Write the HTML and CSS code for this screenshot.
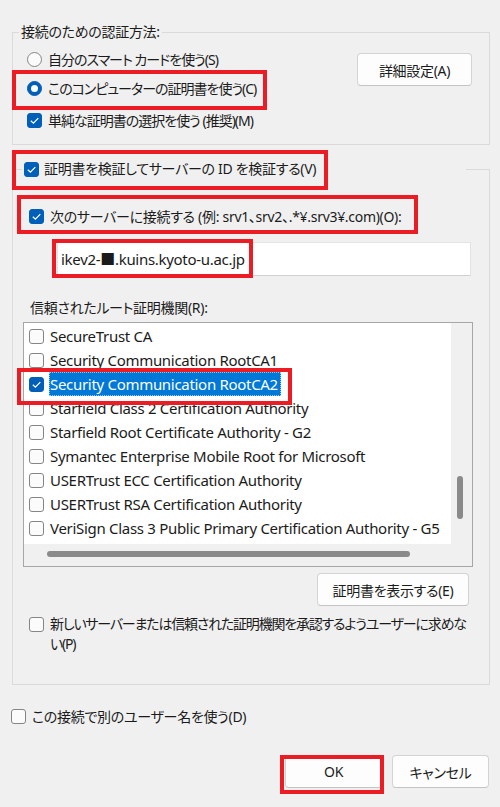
FILE: index.html
```html
<!DOCTYPE html>
<html lang="ja">
<head>
  <meta charset="utf-8">
  <title>保護された EAP のプロパティ</title>
  <link rel="stylesheet" href="styles.css">
</head>
<body>
  <div class="dialog">
    <fieldset class="group auth">
      <legend>接続のための認証方法:</legend>
      <div class="auth-body">
        <div class="options">
          <div class="opt opt-smart"><span class="radio"></span>自分のスマート カードを使う(S)</div>
          <div class="opt opt-cert"><span class="radio on"></span>このコンピューターの証明書を使う(C)</div>
          <div class="opt opt-simple"><span class="box on"><svg viewBox="0 0 15 15"><path d="M3.8 7.7l2.6 2.5 4.9-5.1"/></svg></span>単純な証明書の選択を使う (推奨)(M)</div>
        </div>
        <button class="btn btn-adv">詳細設定(A)</button>
      </div>
    </fieldset>

    <fieldset class="group verify">
      <legend><span class="box on"><svg viewBox="0 0 15 15"><path d="M3.8 7.7l2.6 2.5 4.9-5.1"/></svg></span>証明書を検証してサーバーの ID を検証する(V)</legend>
      <div class="verify-body">
        <div class="opt opt-server"><span class="box on"><svg viewBox="0 0 15 15"><path d="M3.8 7.7l2.6 2.5 4.9-5.1"/></svg></span>次のサーバーに接続する (例: srv1、srv2、.*¥.srv3¥.com)(O):</div>
        <div class="field">ikev2-■.kuins.kyoto-u.ac.jp</div>
        <div class="list-label">信頼されたルート証明機関(R):</div>
        <div class="list">
          <div class="list-items">
            <div class="item"><span class="box"></span><span class="item-text">SecureTrust CA</span></div>
            <div class="item"><span class="box"></span><span class="item-text">Security Communication RootCA1</span></div>
            <div class="item"><span class="box on"><svg viewBox="0 0 15 15"><path d="M3.8 7.7l2.6 2.5 4.9-5.1"/></svg></span><span class="item-text selected">Security Communication RootCA2</span></div>
            <div class="item"><span class="box"></span><span class="item-text">Starfield Class 2 Certification Authority</span></div>
            <div class="item"><span class="box"></span><span class="item-text">Starfield Root Certificate Authority - G2</span></div>
            <div class="item"><span class="box"></span><span class="item-text">Symantec Enterprise Mobile Root for Microsoft</span></div>
            <div class="item"><span class="box"></span><span class="item-text">USERTrust ECC Certification Authority</span></div>
            <div class="item"><span class="box"></span><span class="item-text">USERTrust RSA Certification Authority</span></div>
            <div class="item"><span class="box"></span><span class="item-text">VeriSign Class 3 Public Primary Certification Authority - G5</span></div>
          </div>
          <div class="vscroll"><span class="vthumb"></span></div>
          <div class="hscroll"><span class="hthumb"></span></div>
          <div class="corner"></div>
        </div>
        <button class="btn btn-view">証明書を表示する(E)</button>
        <div class="opt opt-prompt"><span class="box"></span><span class="prompt-text">新しいサーバーまたは信頼された証明機関を承認するようユーザーに求めな<br>い(P)</span></div>
      </div>
    </fieldset>

    <div class="opt opt-user"><span class="box"></span>この接続で別のユーザー名を使う(D)</div>

    <div class="actions">
      <button class="btn btn-ok">OK</button>
      <button class="btn btn-cancel">キャンセル</button>
    </div>
  </div>

  <!-- red annotation frames -->
  <div class="mark mark-cert"></div>
  <div class="mark mark-verify"></div>
  <div class="mark mark-server"></div>
  <div class="mark mark-field"></div>
  <div class="mark mark-root"></div>
  <div class="mark mark-ok"></div>
</body>
</html>
```

FILE: styles.css
```css
* {
  box-sizing: border-box;
}

body {
  margin: 0;
  width: 500px;
  height: 807px;
  background-color: #f0f0f0;
  color: #1b1b1b;
  font-family: "Noto Sans", "Noto Sans CJK JP", sans-serif;
  font-size: 14px;
  letter-spacing: -0.3px;
  font-feature-settings: "palt";
  position: relative;
  overflow: hidden;
}

.dialog {
  padding: 0 10px 0 12px;
}

.group {
  margin: 0;
  padding: 0;
  border: 1px solid #dadada;
  min-width: 0;
}

.group legend {
  margin-left: 6px;
  padding: 0 2px;
  line-height: 20px;
}

.auth {
  margin-top: 22px;
  padding-bottom: 12px;
}

.auth-body {
  display: flex;
  justify-content: space-between;
  padding: 5px 17px 0 14px;
}

.opt {
  display: flex;
  align-items: center;
  gap: 6px;
  height: 24px;
  white-space: nowrap;
}

.options .opt {
  letter-spacing: -1px;
}

.opt-cert {
  margin-top: 5px;
}

.opt-simple {
  margin-top: 8px;
}

/* check boxes and radio buttons */
.box,
.radio {
  flex: none;
  width: 15px;
  height: 15px;
  border: 1px solid #858585;
  background-color: #fbfbfb;
}

.box {
  border-radius: 3px;
}

.box svg {
  display: block;
  width: 15px;
  height: 15px;
  margin: -1px;
}

.box svg path {
  fill: none;
  stroke: #fff;
  stroke-width: 1.3;
}

.box.on {
  background-color: #005fb8;
  border-color: #005fb8;
}

.radio {
  border-radius: 50%;
}

.radio.on {
  background-color: #005fb8;
  border-color: #005fb8;
  display: flex;
  align-items: center;
  justify-content: center;
}

.radio.on::after {
  content: "";
  width: 7px;
  height: 7px;
  border-radius: 50%;
  background-color: #fff;
}

.btn {
  font: inherit;
  letter-spacing: inherit;
  color: #1b1b1b;
  background-color: #fdfdfd;
  border: 1px solid #d3d3d3;
  border-bottom-color: #c4c4c4;
  border-radius: 4px;
  padding: 0;
  height: 33px;
}

.btn-adv {
  width: 115px;
  margin-top: 6px;
}

/* certificate verification group */
.verify {
  margin-top: 12px;
  padding-bottom: 30px;
}

.verify legend {
  display: flex;
  align-items: center;
  gap: 5px;
  width: 444px;
  height: 24px;
  margin-left: 9px;
  padding: 0 0 0 2px;
  background-color: #f0f0f0;
  white-space: nowrap;
}

.verify-body {
  display: flex;
  flex-direction: column;
  padding: 0 0 0 10px;
}

.opt-server {
  margin: 23px 0 0 6px;
}

.field {
  width: 414px;
  height: 34px;
  margin: 14px 0 0 34px;
  padding-left: 3px;
  line-height: 32px;
  font-size: 15px;
  background-color: #fff;
  border: 1px solid #e3e3e3;
  border-bottom-color: #d0d0d0;
}

.list-label {
  margin: 20px 0 0 7px;
  line-height: 24px;
}

.list {
  display: grid;
  grid-template-columns: 1fr 21px;
  grid-template-rows: 1fr 22px;
  width: 450px;
  height: 245px;
  margin-top: 2px;
  border: 1px solid #a6a6a6;
  background-color: #fff;
}

.list-items {
  padding: 1px 0 0 5px;
  overflow: hidden;
  font-size: 15px;
}

.item {
  display: flex;
  align-items: center;
  gap: 5px;
  height: 24px;
  white-space: nowrap;
}

.item-text {
  line-height: 24px;
  padding: 0 3px 0 1px;
}

.item-text.selected {
  background-color: #0078d7;
  color: #fff;
  outline: 1px dotted #9cc7ef;
  outline-offset: -1px;
}

.vscroll,
.hscroll,
.corner {
  background-color: #f0f0f0;
}

.vthumb {
  display: block;
  width: 6px;
  height: 43px;
  margin: 153px 0 0 6px;
  border-radius: 3px;
  background-color: #8a8a8a;
}

.hthumb {
  display: block;
  width: 363px;
  height: 6px;
  margin: 7px 0 0 23px;
  border-radius: 3px;
  background-color: #8a8a8a;
}

.btn-view {
  align-self: flex-end;
  width: 152px;
  margin: 6px 20px 0 0;
}

.opt-prompt {
  align-items: flex-start;
  height: auto;
  margin: 8px 0 0 6px;
}

.opt-prompt .box {
  margin-top: 3px;
}

.prompt-text {
  line-height: 20px;
  letter-spacing: -1.2px;
}

.opt-user {
  margin: 19px 0 0 -1px;
}

.actions {
  display: flex;
  justify-content: flex-end;
  gap: 10px;
  margin-top: 27px;
  padding-right: 1px;
}

.btn-ok,
.btn-cancel {
  width: 97px;
}

/* red annotation frames */
.mark {
  position: absolute;
  border: 4px solid #ec1c24;
}

.mark-cert {
  left: 12px;
  top: 70px;
  width: 255px;
  height: 40px;
}

.mark-verify {
  left: 12px;
  top: 150px;
  width: 316px;
  height: 40px;
}

.mark-server {
  left: 17px;
  top: 195px;
  width: 401px;
  height: 39px;
}

.mark-field {
  left: 52px;
  top: 239px;
  width: 201px;
  height: 39px;
}

.mark-root {
  left: 17px;
  top: 368px;
  width: 275px;
  height: 37px;
}

.mark-ok {
  left: 280px;
  top: 755px;
  width: 104px;
  height: 39px;
}
```
